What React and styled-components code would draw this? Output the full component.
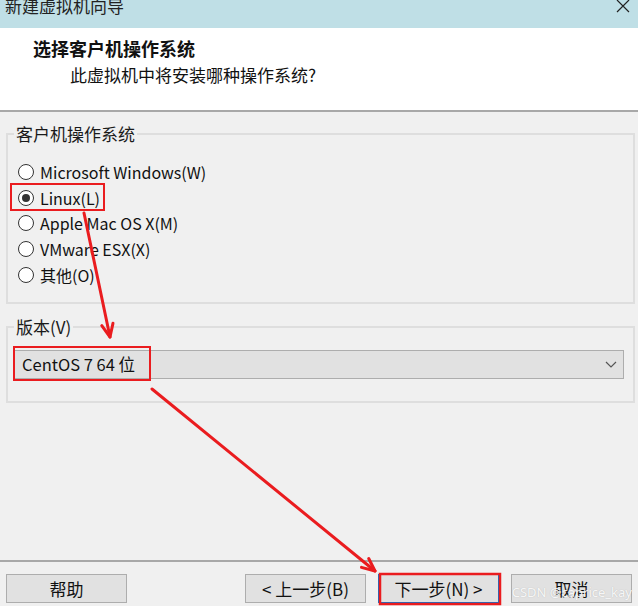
import React from "react";
import styled, { createGlobalStyle } from "styled-components";

const GlobalStyle = createGlobalStyle`
  html, body {
    margin: 0;
    padding: 0;
    background: #f0f0f0;
  }
  body {
    font-family: "Noto Sans CJK SC", "Noto Sans", sans-serif;
    color: #1a1a1a;
  }
`;

const Window = styled.div`
  position: relative;
  width: 638px;
  height: 606px;
  display: flex;
  flex-direction: column;
  background: #f0f0f0;
  overflow: hidden;
`;

const TitleBar = styled.div`
  height: 28px;
  background: #bfdfe6;
  display: flex;
  align-items: flex-start;
  justify-content: space-between;
  padding: 0 8px 0 5px;
  overflow: hidden;
  flex-shrink: 0;
`;

const TitleText = styled.span`
  font-size: 17px;
  line-height: 17px;
  margin-top: -3px;
  color: #222;
`;

const Header = styled.div`
  height: 82px;
  background: #ffffff;
  border-bottom: 2px solid #a8a8a8;
  flex-shrink: 0;
  display: flex;
  flex-direction: column;
`;

const HeaderTitle = styled.div`
  font-size: 18px;
  font-weight: bold;
  line-height: 24px;
  margin: 8px 0 0 33px;
  color: #111;
`;

const HeaderSub = styled.div`
  font-size: 17px;
  line-height: 24px;
  margin: 3px 0 0 70px;
  color: #111;
`;

const Body = styled.div`
  flex: 1;
  padding: 12px 3px 0 6px;
  display: flex;
  flex-direction: column;
`;

const Group = styled.fieldset`
  margin: ${(p) => p.$top || 0}px 0 0 0;
  border: 2px solid #dedede;
  padding: ${(p) => p.$pad};
  min-width: 0;
`;

const Legend = styled.legend`
  font-size: 17px;
  line-height: 20px;
  padding: 0 2px;
  margin-left: 0;
  color: #1a1a1a;
`;

const RadioList = styled.div`
  display: flex;
  flex-direction: column;
  padding-left: 4px;
`;

const RadioRow = styled.label`
  height: 25.75px;
  display: flex;
  align-items: center;
  gap: 6px;
  font-size: 16px;
  color: #111;
`;

const RadioDot = styled.span`
  width: 16px;
  height: 16px;
  box-sizing: border-box;
  border-radius: 50%;
  border: 1px solid #333;
  background: #fff;
  display: flex;
  align-items: center;
  justify-content: center;
  flex-shrink: 0;

  &::after {
    content: "";
    width: 8px;
    height: 8px;
    border-radius: 50%;
    background: ${(p) => (p.$checked ? "#333" : "transparent")};
  }
`;

const Select = styled.div`
  height: 29px;
  box-sizing: border-box;
  background: #e1e1e1;
  border: 1px solid #adadad;
  display: flex;
  align-items: center;
  justify-content: space-between;
  padding: 0 6px 0 7px;
  font-size: 16.5px;
  color: #111;
`;

const Footer = styled.div`
  height: 46px;
  border-top: 2px solid #a8a8a8;
  box-sizing: border-box;
  flex-shrink: 0;
  display: flex;
  align-items: flex-start;
  padding: 12px 6px 0 6px;
  gap: 12px;
`;

const Spacer = styled.div`
  flex: 1;
`;

const Button = styled.div`
  width: 121px;
  height: 29px;
  box-sizing: border-box;
  background: #e1e1e1;
  border: 1px solid ${(p) => (p.$default ? "#0078d7" : "#adadad")};
  display: flex;
  align-items: center;
  justify-content: center;
  font-size: 17px;
  color: #111;
`;

const Overlay = styled.svg`
  position: absolute;
  left: 0;
  top: 0;
  pointer-events: none;
`;

const Watermark = styled.span`
  position: absolute;
  right: 6px;
  bottom: 5px;
  font-family: "Noto Sans", sans-serif;
  font-size: 13px;
  color: rgba(255, 255, 255, 0.9);
  text-shadow: 0 0 1px rgba(120, 120, 120, 0.45);
`;

const systems = [
  { label: "Microsoft Windows(W)" },
  { label: "Linux(L)", checked: true },
  { label: "Apple Mac OS X(M)" },
  { label: "VMware ESX(X)" },
  { label: "其他(O)" },
];

const RED = "#ea1c1f";

function Arrow({ x1, y1, x2, y2 }) {
  const a = Math.atan2(y2 - y1, x2 - x1);
  const len = 14;
  const spread = 0.42;
  const p1 = [x2 - len * Math.cos(a - spread), y2 - len * Math.sin(a - spread)];
  const p2 = [x2 - len * Math.cos(a + spread), y2 - len * Math.sin(a + spread)];
  return (
    <g stroke={RED} strokeWidth="3" fill="none" strokeLinecap="round">
      <line x1={x1} y1={y1} x2={x2} y2={y2} />
      <polyline points={`${p1[0]},${p1[1]} ${x2},${y2} ${p2[0]},${p2[1]}`} strokeLinejoin="round" />
    </g>
  );
}

export default function App() {
  return (
    <>
      <GlobalStyle />
      <Window>
        <TitleBar>
          <TitleText>新建虚拟机向导</TitleText>
          <svg width="14" height="14" viewBox="0 0 14 14" style={{ marginTop: -1 }}>
            <path d="M1 1 L13 13 M13 1 L1 13" stroke="#222" strokeWidth="1.2" />
          </svg>
        </TitleBar>

        <Header>
          <HeaderTitle>选择客户机操作系统</HeaderTitle>
          <HeaderSub>此虚拟机中将安装哪种操作系统?</HeaderSub>
        </Header>

        <Body>
          <Group $pad="15px 6px 14px 6px">
            <Legend>客户机操作系统</Legend>
            <RadioList>
              {systems.map((s) => (
                <RadioRow key={s.label}>
                  <RadioDot $checked={s.checked} />
                  {s.label}
                </RadioRow>
              ))}
            </RadioList>
          </Group>

          <Group $top={13} $pad="13px 9px 22px 6px">
            <Legend>版本(V)</Legend>
            <Select>
              <span>CentOS 7 64 位</span>
              <svg width="12" height="7" viewBox="0 0 12 7">
                <path d="M1 1 L6 6 L11 1" stroke="#555" strokeWidth="1.2" fill="none" />
              </svg>
            </Select>
          </Group>
        </Body>

        <Footer>
          <Button>帮助</Button>
          <Spacer />
          <Button>&lt; 上一步(B)</Button>
          <Button $default>下一步(N) &gt;</Button>
          <Button>取消</Button>
        </Footer>

        <Overlay width="638" height="606">
          <rect x="11" y="184" width="93" height="26" stroke={RED} strokeWidth="2" fill="none" />
          <rect x="14" y="347" width="136" height="33" stroke={RED} strokeWidth="2" fill="none" />
          <rect x="380" y="574" width="120" height="30" stroke={RED} strokeWidth="2.5" fill="none" />
          <Arrow x1={84} y1={213} x2={110} y2={337} />
          <Arrow x1={152} y1={389} x2={375} y2={571} />
        </Overlay>
        <Watermark>CSDN @caprice_kay</Watermark>
      </Window>
    </>
  );
}
